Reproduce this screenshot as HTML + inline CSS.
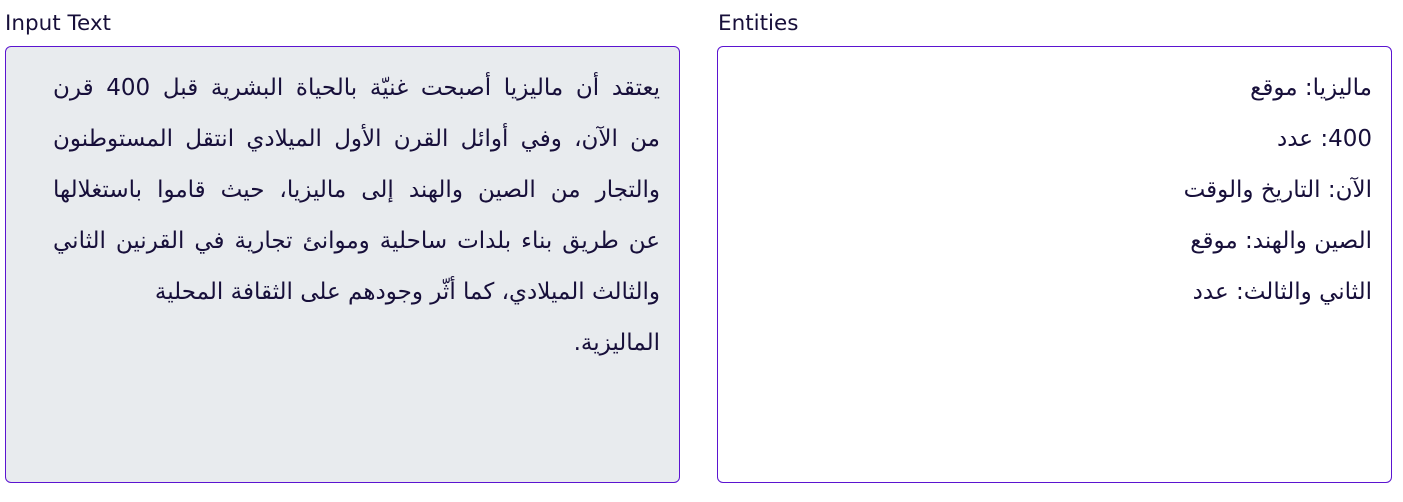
<!DOCTYPE html>
<html><head><meta charset="utf-8"><style>
body{margin:0;width:1403px;height:502px;background:#fff;font-family:"DejaVu Sans","Liberation Sans",sans-serif;color:#170f3a;overflow:hidden;position:relative}
.lbl{position:absolute;top:11px;font-size:21.5px;font-family:"DejaVu Sans",sans-serif}
.box{position:absolute;top:46px;border:1px solid #5b14d0;border-radius:6px;box-sizing:border-box}
.txt{position:absolute;direction:rtl;text-align:right;font-size:23px;line-height:51px}
.j{text-align:justify;text-align-last:justify}
</style></head><body>
<div class="lbl" style="left:5px">Input Text</div>
<div class="lbl" style="left:718px">Entities</div>
<div class="box" style="left:5px;width:675px;height:437px;background:#e8ebee"></div>
<div class="box" style="left:717px;width:675px;height:437px;background:#fff"></div>
<div class="txt" style="right:743px;top:63px;width:607px">
<div class="j">يعتقد أن ماليزيا أصبحت غنيّة بالحياة البشرية قبل 400 قرن</div>
<div class="j">من الآن، وفي أوائل القرن الأول الميلادي انتقل المستوطنون</div>
<div class="j">والتجار من الصين والهند إلى ماليزيا، حيث قاموا باستغلالها</div>
<div class="j">عن طريق بناء بلدات ساحلية وموانئ تجارية في القرنين الثاني</div>
<div>والثالث الميلادي، كما أثّر وجودهم على الثقافة المحلية</div>
<div>الماليزية.</div>
</div>
<div class="txt" style="right:31px;top:63px;width:620px">
<div>ماليزيا: موقع</div>
<div>400: عدد</div>
<div>الآن: التاريخ والوقت</div>
<div>الصين والهند: موقع</div>
<div>الثاني والثالث: عدد</div>
</div>
</body></html>
